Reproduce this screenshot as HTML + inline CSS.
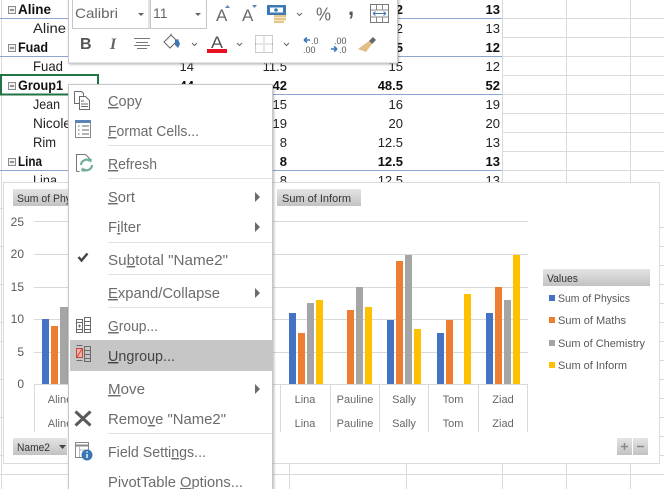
<!DOCTYPE html>
<html><head><meta charset="utf-8"><style>
html,body{margin:0;padding:0;background:#fff;width:664px;height:489px;overflow:hidden}
svg{display:block}
text{font-family:"Liberation Sans",sans-serif}
.t{font-size:13px;fill:#222}
.b{font-size:13px;font-weight:bold;fill:#111}
.m{font-size:14.5px;fill:#6c6c6c}
.c{font-size:11px;fill:#595959}
.a{font-size:11px;fill:#666;text-anchor:middle}
.y{font-size:12px;fill:#595959;text-anchor:end}
.g{stroke:#dadada;stroke-width:1;fill:none}
.cg{stroke:#d9d9d9;stroke-width:1;fill:none}
.i{stroke:#6a6a6a;stroke-width:1;fill:none}
</style></head><body>
<svg width="664" height="489" viewBox="0 0 664 489" xmlns="http://www.w3.org/2000/svg">
<defs>
<linearGradient id="bt" x1="0" y1="0" x2="0" y2="1"><stop offset="0" stop-color="#e4e4e4"/><stop offset="1" stop-color="#c2c2c2"/></linearGradient>
<filter id="sh" x="-5%" y="-5%" width="110%" height="110%"><feDropShadow dx="1" dy="1" stdDeviation="1.4" flood-color="#000" flood-opacity=".28"/></filter>
</defs>
<rect width="664" height="489" fill="#fff"/>
<!-- sheet gridlines -->
<path class="g" d="M502.5 18.5H664M502.5 37.5H664M502.5 56.5H664M502.5 75.5H664M502.5 94.5H664M502.5 113.5H664M502.5 132.5H664M502.5 151.5H664M502.5 170.5H664M660 227.5H664M660 246.5H664M660 265.5H664M660 284.5H664M660 303.5H664M660 322.5H664M660 341.5H664M660 360.5H664M660 379.5H664M660 398.5H664M660 417.5H664M660 436.5H664M660 455.5H664M0 208.500H3M0 246.500H3M0 284.500H3M0 322.500H3M0 341.500H3M0 379.500H3M0 417.500H3M0 455.500H3M0 474.5H664M502.5 0V182M566.5 0V182M630.5 0V182M289.5 464V489M406.5 464V489M502.5 464V489M566.5 464V489M630.5 464V489M1.5 0V489"/>
<path d="M0 18.5H502M0 56.5H502M0 94.5H502M0 170.5H502" stroke="#8ea6cf" stroke-width="1"/>
<!-- table -->
<g>
<text class="b" x="18" y="14" style="font-size:14px" textLength="33" lengthAdjust="spacingAndGlyphs">Aline</text>
<text class="t" x="33" y="33" style="font-size:14px" textLength="33" lengthAdjust="spacingAndGlyphs">Aline</text>
<text class="b" x="18" y="52" style="font-size:14px" textLength="30" lengthAdjust="spacingAndGlyphs">Fuad</text>
<text class="t" x="33" y="71" style="font-size:14px" textLength="30" lengthAdjust="spacingAndGlyphs">Fuad</text>
<text class="b" x="18" y="90" style="font-size:14px" textLength="45" lengthAdjust="spacingAndGlyphs">Group1</text>
<text class="t" x="33" y="109" style="font-size:14px" textLength="27" lengthAdjust="spacingAndGlyphs">Jean</text>
<text class="t" x="33" y="128" style="font-size:14px" textLength="38" lengthAdjust="spacingAndGlyphs">Nicole</text>
<text class="t" x="33" y="147" style="font-size:14px" textLength="23" lengthAdjust="spacingAndGlyphs">Rim</text>
<text class="b" x="18" y="166" style="font-size:14px" textLength="24" lengthAdjust="spacingAndGlyphs">Lina</text>
<text class="t" x="33" y="185" style="font-size:14px" textLength="24" lengthAdjust="spacingAndGlyphs">Lina</text>
</g>
<g text-anchor="end">
<text class="b" x="403" y="14">2</text><text class="b" x="500" y="14">13</text>
<text class="t" x="403" y="33">2</text><text class="t" x="500" y="33">13</text>
<text class="b" x="403" y="52">5</text><text class="b" x="500" y="52">12</text>
<text class="t" x="194" y="71">14</text><text class="t" x="287" y="71">11.5</text><text class="t" x="403" y="71">15</text><text class="t" x="500" y="71">12</text>
<text class="b" x="194" y="90">44</text><text class="b" x="287" y="90">42</text><text class="b" x="403" y="90">48.5</text><text class="b" x="500" y="90">52</text>
<text class="t" x="287" y="109">15</text><text class="t" x="403" y="109">16</text><text class="t" x="500" y="109">19</text>
<text class="t" x="287" y="128">19</text><text class="t" x="403" y="128">20</text><text class="t" x="500" y="128">20</text>
<text class="t" x="287" y="147">8</text><text class="t" x="403" y="147">12.5</text><text class="t" x="500" y="147">13</text>
<text class="b" x="287" y="166">8</text><text class="b" x="403" y="166">12.5</text><text class="b" x="500" y="166">13</text>
<text class="t" x="287" y="185">8</text><text class="t" x="403" y="185">12.5</text><text class="t" x="500" y="185">13</text>
</g>
<!-- outline buttons -->
<g fill="#f2f2f2" stroke="#8a8a8a">
<rect x="8.5" y="6.5" width="7" height="7"/><rect x="8.5" y="44.5" width="7" height="7"/><rect x="8.5" y="82.5" width="7" height="7"/><rect x="8.5" y="158.5" width="7" height="7"/>
</g>
<path d="M10 10h4M10 48h4M10 86h4M10 162h4" stroke="#333" fill="none"/>
<rect x="1" y="75" width="97" height="19.5" fill="none" stroke="#217346" stroke-width="2"/>
<!-- chart -->
<rect x="3.5" y="182.5" width="656" height="281" fill="#fff" stroke="#dcdcdc"/>
<path class="cg" d="M34 221.5H528M34 254.5H528M34 287.5H528M34 319.5H528M34 352.5H528"/>
<path d="M34 384.5H528M34.5 384V432M280.5 384V432M330.5 384V432M379.5 384V432M428.5 384V432M478.5 384V432M527.5 384V432" stroke="#d9d9d9" fill="none"/>
<g fill="#4472c4">
<rect x="42" y="319" width="7" height="65"/><rect x="289" y="313" width="7" height="71"/><rect x="387" y="320" width="7" height="64"/><rect x="437" y="333" width="7" height="51"/><rect x="486" y="313" width="7" height="71"/>
</g>
<g fill="#ed7d31">
<rect x="51" y="326" width="7" height="58"/><rect x="298" y="333" width="7" height="51"/><rect x="347" y="310" width="7" height="74"/><rect x="396" y="261" width="7" height="123"/><rect x="446" y="320" width="7" height="64"/><rect x="495" y="287" width="7" height="97"/>
</g>
<g fill="#a5a5a5">
<rect x="60" y="307" width="8" height="77"/><rect x="307" y="303" width="7" height="81"/><rect x="356" y="287" width="7" height="97"/><rect x="405" y="255" width="7" height="129"/><rect x="504" y="300" width="7" height="84"/>
</g>
<g fill="#ffc000">
<rect x="316" y="300" width="7" height="84"/><rect x="365" y="307" width="7" height="77"/><rect x="414" y="329" width="7" height="55"/><rect x="464" y="294" width="7" height="90"/><rect x="513" y="255" width="7" height="129"/>
</g>
<g>
<text class="y" x="24" y="226">25</text><text class="y" x="24" y="258">20</text><text class="y" x="24" y="291">15</text><text class="y" x="24" y="323">10</text><text class="y" x="24" y="356">5</text><text class="y" x="24" y="388">0</text>
</g>
<g>
<text class="a" x="305" y="403">Lina</text><text class="a" x="355" y="403">Pauline</text><text class="a" x="404" y="403">Sally</text><text class="a" x="453" y="403">Tom</text><text class="a" x="503" y="403">Ziad</text>
<text class="a" x="305" y="427">Lina</text><text class="a" x="355" y="427">Pauline</text><text class="a" x="404" y="427">Sally</text><text class="a" x="453" y="427">Tom</text><text class="a" x="503" y="427">Ziad</text>
<text class="a" x="60" y="403">Aline</text><text class="a" x="60" y="427">Aline</text>
</g>
<!-- field buttons -->
<rect x="13" y="189" width="60" height="17" fill="url(#bt)"/>
<text class="c" x="17" y="202" style="fill:#333" textLength="54" lengthAdjust="spacingAndGlyphs">Sum of Phy</text>
<rect x="277" y="189" width="84" height="17" fill="url(#bt)"/>
<text class="c" x="282" y="202" style="fill:#333" textLength="69" lengthAdjust="spacingAndGlyphs">Sum of Inform</text>
<rect x="13" y="438" width="54" height="17" fill="url(#bt)"/>
<text class="c" x="17" y="451" style="fill:#333" textLength="33" lengthAdjust="spacingAndGlyphs">Name2</text>
<path d="M59 445h7l-3.500 4z" fill="#444"/>
<rect x="617" y="438" width="15" height="17" fill="url(#bt)"/><rect x="633" y="438" width="15" height="17" fill="url(#bt)"/>
<path d="M621 446.500h7M624.500 443v7M637 446.500h7" stroke="#888" stroke-width="1.500" fill="none"/>
<!-- legend -->
<rect x="543" y="269" width="107" height="17" fill="url(#bt)"/>
<text class="c" x="547" y="282" style="fill:#333" textLength="31" lengthAdjust="spacingAndGlyphs">Values</text>
<rect x="549" y="295" width="6" height="6" fill="#4472c4"/><rect x="549" y="317" width="6" height="6" fill="#ed7d31"/><rect x="549" y="340" width="6" height="6" fill="#a5a5a5"/><rect x="549" y="362" width="6" height="6" fill="#ffc000"/>
<text class="c" x="558" y="302" textLength="72" lengthAdjust="spacingAndGlyphs">Sum of Physics</text>
<text class="c" x="558" y="324" textLength="68" lengthAdjust="spacingAndGlyphs">Sum of Maths</text>
<text class="c" x="558" y="347" textLength="87" lengthAdjust="spacingAndGlyphs">Sum of Chemistry</text>
<text class="c" x="558" y="369" textLength="69" lengthAdjust="spacingAndGlyphs">Sum of Inform</text>

<!-- context menu -->
<rect x="68.500" y="84.500" width="204" height="410" fill="#fff" stroke="#c8c8c8" filter="url(#sh)"/>
<rect x="70" y="340" width="202" height="31" fill="#c6c6c6"/>
<path d="M108 145.500H272M108 178.500H272M108 242.500H272M108 274.500H272M108 307.500H272M108 433.500H272" stroke="#e1e1e1" fill="none"/>
<text class="m" x="108" y="106" textLength="34" lengthAdjust="spacingAndGlyphs"><tspan text-decoration="underline">C</tspan>opy</text>
<text class="m" x="108" y="136" textLength="91" lengthAdjust="spacingAndGlyphs"><tspan text-decoration="underline">F</tspan>ormat Cells...</text>
<text class="m" x="108" y="169" textLength="49" lengthAdjust="spacingAndGlyphs"><tspan text-decoration="underline">R</tspan>efresh</text>
<text class="m" x="108" y="202" textLength="27" lengthAdjust="spacingAndGlyphs"><tspan text-decoration="underline">S</tspan>ort</text>
<text class="m" x="108" y="232" textLength="33" lengthAdjust="spacingAndGlyphs">F<tspan text-decoration="underline">i</tspan>lter</text>
<text class="m" x="108" y="265" textLength="120" lengthAdjust="spacingAndGlyphs">Su<tspan text-decoration="underline">b</tspan>total "Name2"</text>
<text class="m" x="108" y="298" textLength="112" lengthAdjust="spacingAndGlyphs"><tspan text-decoration="underline">E</tspan>xpand/Collapse</text>
<text class="m" x="108" y="331" textLength="50" lengthAdjust="spacingAndGlyphs"><tspan text-decoration="underline">G</tspan>roup...</text>
<text class="m" x="108" y="361" textLength="67" lengthAdjust="spacingAndGlyphs" style="fill:#444"><tspan text-decoration="underline">U</tspan>ngroup...</text>
<text class="m" x="108" y="394" textLength="37" lengthAdjust="spacingAndGlyphs"><tspan text-decoration="underline">M</tspan>ove</text>
<text class="m" x="108" y="424" textLength="118" lengthAdjust="spacingAndGlyphs">Remo<tspan text-decoration="underline">v</tspan>e "Name2"</text>
<text class="m" x="108" y="457" textLength="98" lengthAdjust="spacingAndGlyphs">Field Setti<tspan text-decoration="underline">n</tspan>gs...</text>
<text class="m" x="108" y="487" textLength="135" lengthAdjust="spacingAndGlyphs">PivotTable <tspan text-decoration="underline">O</tspan>ptions...</text>
<!-- submenu arrows -->
<path d="M255 192l5 5-5 5zM255 222l5 5-5 5zM255 288l5 5-5 5zM255 384l5 5-5 5z" fill="#6a6a6a"/>
<!-- check -->
<path d="M78.500 257l3 3.500 6-7" stroke="#444" stroke-width="2.400" fill="none"/>
<!-- copy icon -->
<g class="i"><path d="M74.500 91.500h7l2 2v3M74.500 91.500v12h5"/><path d="M79.500 96.500h6l4 4v9h-10z" fill="#fff"/><path d="M81 101h3M81 104h7M81 106.500h7"/></g>
<!-- format cells icon -->
<rect x="75.500" y="120.500" width="15" height="17" fill="#fff" stroke="#888"/><rect x="75" y="120" width="16" height="3" fill="#5b84b8"/>
<path d="M78 126h1.500M82 126h7M78 130h1.500M82 130h7M78 134h1.500M82 134h7" stroke="#666" fill="none"/>
<!-- refresh icon -->
<path d="M76.500 171.500v-17h9l4 4v3M76.500 171.500h3" stroke="#777" fill="none"/>
<path d="M81 165a5.500 5.500 0 0 1 9-4M92 165a5.500 5.500 0 0 1-9 4" stroke="#6fae9c" stroke-width="2.200" fill="none"/>
<path d="M88 158l4 1-1 4zM85 172l-4-1 1-4z" fill="#6fae9c"/>
<!-- group icon -->
<g class="i"><rect x="76.500" y="319.500" width="6" height="13"/><path d="M76.500 322.500h6M76.500 329.500h6M78 326h3M79.500 324.500v3"/><rect x="84.500" y="317.500" width="6" height="15"/><path d="M84.500 321.500h6M84.500 325.500h6M84.500 329.500h6"/></g>
<!-- ungroup icon -->
<rect x="76.500" y="348.500" width="6" height="9" fill="#f3b3a8" stroke="#c9473a"/><path d="M77 357l5-8" stroke="#c9473a"/>
<g class="i"><path d="M76.500 345.500h6M76.500 360.500h6"/><rect x="84.500" y="346.500" width="6" height="15"/><path d="M84.500 350.500h6M84.500 354.500h6M84.500 358.500h6"/></g>
<!-- remove icon -->
<path d="M75.500 411.500l15 14M90.500 411.500l-15 14" stroke="#5a5a5a" stroke-width="3" fill="none"/>
<!-- field settings icon -->
<rect x="75.500" y="442.500" width="13" height="15" fill="#fff" stroke="#888"/><path d="M76 445.500h12" stroke="#888" stroke-width="2"/><path d="M79.500 446v11M80 450h8" stroke="#bbb"/>
<circle cx="87" cy="455" r="5.500" fill="#3a78b5"/><path d="M87 451.500v1.200M87 454v4" stroke="#fff" stroke-width="1.400"/>

<!-- mini toolbar -->
<rect x="68.500" y="-5" width="329" height="68" fill="#fff" stroke="#c8c8c8" filter="url(#sh)"/>
<path d="M72.500 0v28.500h76.500V0M150.500 0v28.500h56V0" stroke="#c6c6c6" fill="#fff"/>
<text x="75" y="18" style="font-size:14px;fill:#666" textLength="43" lengthAdjust="spacingAndGlyphs">Calibri</text>
<text x="153" y="18" style="font-size:14px;fill:#666;font-kerning:none;letter-spacing:-1px">11</text>
<path d="M138 13h6l-3 3zM195 13h6l-3 3z" fill="#666"/>
<text x="216" y="21" style="font-size:17px;fill:#6a6a6a">A</text><path d="M225 8l2.500-3 2.500 3z" fill="#5b84b8"/>
<text x="242" y="21" style="font-size:17px;fill:#6a6a6a">A</text><path d="M252 5l2.500 3 2.500-3z" fill="#5b84b8"/>
<!-- accounting icon -->
<rect x="267" y="5" width="19" height="10" fill="#3d78b5"/><rect x="270" y="7.500" width="13" height="5" fill="#fff"/><circle cx="276" cy="10" r="1.800" fill="#3d78b5"/>
<rect x="274" y="15" width="12" height="2.500" fill="#e6c88a"/><rect x="274" y="18" width="12" height="2.500" fill="#e6c88a"/><rect x="274" y="21" width="10" height="2" fill="#e6c88a"/>
<path d="M297 13l2.500 2.500 2.500-2.500M192 43l2.500 2.500 2.500-2.500M237 43l2.500 2.500 2.500-2.500M284 43l2.500 2.500 2.500-2.500" stroke="#666" fill="none"/>
<text x="316" y="20.500" style="font-size:18px;fill:#666" textLength="15" lengthAdjust="spacingAndGlyphs">%</text>
<text x="348" y="15" style="font-size:22px;font-weight:bold;fill:#555">,</text>
<!-- wrap/width icon -->
<rect x="370.500" y="4.500" width="18" height="18" fill="#fff" stroke="#777"/><path d="M370.500 10h18M370.500 17h18M376.500 4.500v5M382.500 4.500v5M376.500 17v5.500M382.500 17v5.500" stroke="#888" fill="none"/>
<path d="M373 13.500h13M373 13.500l2.500-2M373 13.500l2.500 2M386 13.500l-2.500-2M386 13.500l-2.500 2" stroke="#3d78b5" fill="none"/>
<!-- row 2 -->
<text x="80" y="49" style="font-size:16px;font-weight:bold;fill:#555">B</text>
<text x="110" y="49" style="font-size:16px;font-weight:bold;font-style:italic;fill:#666;font-family:'Liberation Serif',serif">I</text>
<path d="M134 38.500h16M136 42.500h12M134 45.500h16M137 48.500h10" stroke="#777" fill="none"/>
<!-- fill icon -->
<path d="M164 42l7-7 6 6-7 7z" fill="#fff" stroke="#666"/><path d="M171 35v-1.500" stroke="#666"/><path d="M175 40l3-1 2 5-2 4-3-3z" fill="#3d78b5"/>
<text x="211" y="48" style="font-size:17px;fill:#555" textLength="12" lengthAdjust="spacingAndGlyphs">A</text>
<rect x="207" y="49" width="20" height="4" fill="#e81123"/>
<!-- borders -->
<path d="M255.500 35.500h17v17h-17zM264 35.500v17M255.500 44h17" stroke="#999" stroke-dasharray="1 1" fill="none"/>
<!-- decimals -->
<path d="M304 40h6M304 40l3-2.500M304 40l3 2.500" stroke="#3d78b5" stroke-width="1.500" fill="none"/>
<text x="311" y="44" style="font-size:9px;fill:#555">.0</text><text x="303" y="53" style="font-size:9px;fill:#555">.00</text>
<text x="334" y="44" style="font-size:9px;fill:#555">.00</text>
<path d="M331 49h6M337 49l-3-2.500M337 49l-3 2.500" stroke="#3d78b5" stroke-width="1.500" fill="none"/>
<text x="339" y="53" style="font-size:9px;fill:#555">.0</text>
<!-- brush -->
<path d="M369 41l4-4 3 3-4 4z" fill="#666"/><path d="M369 41l3 3-6 8-8-3z" fill="#e2bd84"/>
</svg>
</body></html>
